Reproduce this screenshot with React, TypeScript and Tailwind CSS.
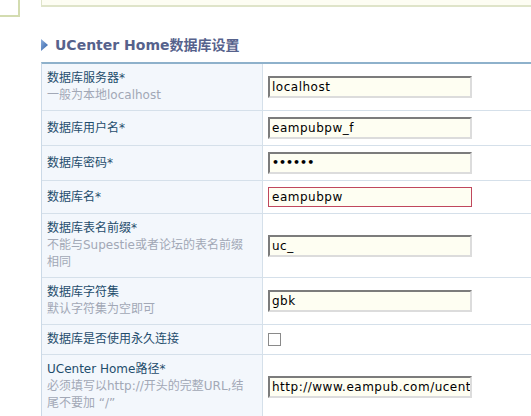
import type { ReactNode } from "react";

const FONT = "font-['DejaVu_Sans','Noto_Sans_CJK_SC',sans-serif]";

type Row = {
  label: string;
  hint?: string[];
  field: ReactNode;
};

function TextInput({ value, invalid = false, secret = false }: { value: string; invalid?: boolean; secret?: boolean }) {
  return (
    <div
      className={
        invalid
          ? "flex h-[20px] w-[204px] items-center overflow-hidden whitespace-nowrap border border-[#c0475d] bg-[#fefef2] pl-[3px] text-[12px] tracking-[0.5px] text-black"
          : "flex h-[22px] w-[204px] items-center overflow-hidden whitespace-nowrap border-[2px] border-t-[#7c7c7c] border-l-[#7c7c7c] border-r-[#dcdcdc] border-b-[#dcdcdc] bg-[#fefef2] pl-[2px] text-[12px] tracking-[0.5px] text-black"
      }
    >
      {secret ? <span className="text-[11px] font-bold tracking-[0px]">{value}</span> : value}
    </div>
  );
}

const ROWS: Row[] = [
  { label: "数据库服务器*", hint: ["一般为本地localhost"], field: <TextInput value="localhost" /> },
  { label: "数据库用户名*", field: <TextInput value="eampubpw_f" /> },
  {
    label: "数据库密码*",
    field: <TextInput value={"\u2022\u2022\u2022\u2022\u2022\u2022"} secret />,
  },
  { label: "数据库名*", field: <TextInput value="eampubpw" invalid /> },
  {
    label: "数据库表名前缀*",
    hint: ["不能与Supestie或者论坛的表名前缀", "相同"],
    field: <TextInput value="uc_" />,
  },
  { label: "数据库字符集", hint: ["默认字符集为空即可"], field: <TextInput value="gbk" /> },
  {
    label: "数据库是否使用永久连接",
    field: <span className="block h-[13px] w-[13px] border border-[#8a8a8a] bg-white" />,
  },
  {
    label: "UCenter Home路径*",
    hint: ["必须填写以http://开头的完整URL,结", "尾不要加 \u201C/\u201D"],
    field: <TextInput value="http://www.eampub.com/ucenter" />,
  },
];

export default function App() {
  return (
    <div className={`h-[416px] w-[531px] overflow-hidden bg-white ${FONT}`}>
      <div className="flex">
        <div className="h-[17px] w-[20px] border-r-2 border-b-2 border-[#d3dcb0]" />
        <div className="ml-[21px] h-[7px] flex-1 border-l border-b-2 border-[#dfe4c9] bg-[#fdfdf3]" />
      </div>

      <div className="mt-[18px] flex h-[20px] items-center gap-[7px] pl-[41px]">
        <svg width="7" height="12" viewBox="0 0 7 12">
          <defs>
            <linearGradient id="tri" x1="0" y1="0" x2="1" y2="1">
              <stop offset="0" stopColor="#8fb0de" />
              <stop offset="1" stopColor="#2d5ea6" />
            </linearGradient>
          </defs>
          <path d="M0 0 L7 6 L0 12 Z" fill="url(#tri)" />
        </svg>
        <h2 className="text-[14px] leading-[20px] font-bold text-[#56628c]">UCenter Home数据库设置</h2>
      </div>

      <div className="mt-[7px] ml-[41px] border-t-2 border-l border-t-[#8eb1cb] border-l-[#cbd9e7]">
        {ROWS.map((row) => (
          <div key={row.label} className="grid grid-cols-[221px_1fr] border-b border-[#d5e0ea]">
            <div className="flex flex-col justify-center border-r border-[#d5e0ea] bg-[#f3f7fc] py-[6px] pl-[5px] text-[12px] leading-[17px]">
              <span className="text-[#1f4d6c]">{row.label}</span>
              {row.hint?.map((line) => (
                <span key={line} className="whitespace-nowrap text-[#a2a8b6]">
                  {line}
                </span>
              ))}
            </div>
            <div className="flex items-center py-[6px] pl-[5px]">{row.field}</div>
          </div>
        ))}
      </div>
    </div>
  );
}
